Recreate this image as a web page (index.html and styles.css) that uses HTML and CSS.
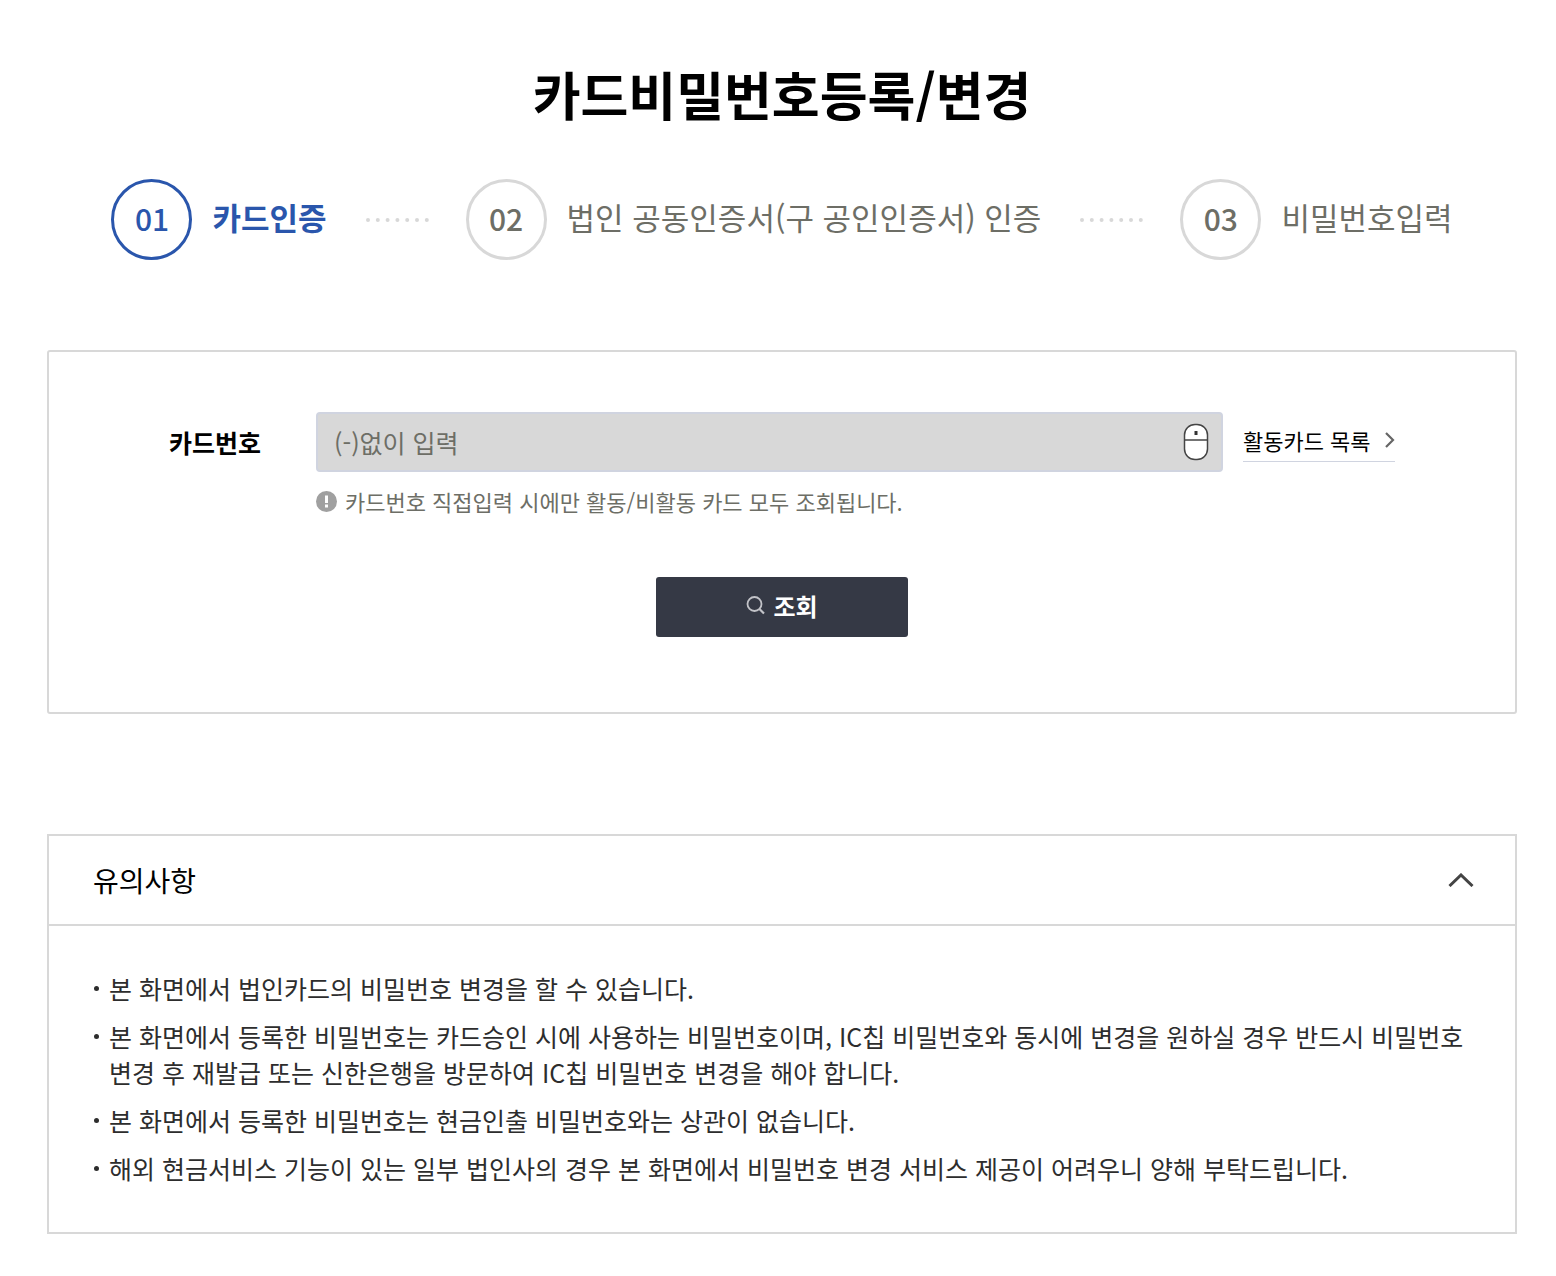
FILE: index.html
```html
<!DOCTYPE html>
<html lang="ko">
<head>
  <meta charset="utf-8" />
  <meta name="viewport" content="width=device-width, initial-scale=1" />
  <title>카드비밀번호등록/변경</title>
  <link rel="stylesheet" href="styles.css">
</head>
<body>
  <main class="container">
    <h1>카드비밀번호등록/변경</h1>

    <ol class="steps">
      <li class="step active" aria-current="step">
        <span class="step-num">01</span>
        <span class="step-name">카드인증</span>
      </li>
      <li class="step">
        <svg class="dots" viewBox="0 0 64 4" aria-hidden="true"><path d="M2 2H62" /></svg>
        <span class="step-num">02</span>
        <span class="step-name">법인 공동인증서(구 공인인증서) 인증</span>
      </li>
      <li class="step">
        <svg class="dots" viewBox="0 0 64 4" aria-hidden="true"><path d="M2 2H62" /></svg>
        <span class="step-num">03</span>
        <span class="step-name">비밀번호입력</span>
      </li>
    </ol>

    <form class="card-form">
      <div class="form-row">
        <label for="card-number">카드번호</label>
        <div class="field">
          <input type="text" id="card-number" placeholder="(-)없이 입력" aria-describedby="card-hint">
          <button type="button" class="mouse-btn" aria-label="마우스 입력">
            <svg width="26" height="38" viewBox="0 0 26 38" aria-hidden="true">
              <rect x="1.5" y="1.5" width="23" height="35" rx="10.5" fill="#fff" stroke="#444" stroke-width="1.5" />
              <path d="M1.5 17H24.5" stroke="#444" stroke-width="1.5" />
              <rect x="11.5" y="8" width="3" height="4" fill="#333" />
            </svg>
          </button>
        </div>
        <a href="#" class="list-link">활동카드 목록
          <svg width="11" height="16" viewBox="0 0 11 16" fill="none" stroke="#666" stroke-width="2.2" aria-hidden="true"><path d="M2 1L9 8L2 15" /></svg>
        </a>
      </div>
      <p class="hint" id="card-hint">
        <svg width="21" height="21" viewBox="0 0 21 21" aria-hidden="true">
          <circle cx="10.5" cy="10.5" r="10.5" fill="#a0a0a0" />
          <path d="M9 4.5h3v7.5h-3zM9 13.5h3v3h-3z" fill="#fff" />
        </svg>
        카드번호 직접입력 시에만 활동/비활동 카드 모두 조회됩니다.
      </p>
      <button type="submit" class="btn">
        <svg width="19" height="19" viewBox="0 0 19 19" fill="none" stroke="#c2c3c8" stroke-width="1.8" aria-hidden="true">
          <circle cx="8.5" cy="8" r="7" />
          <path d="M13.5 13L18 17.5" stroke-width="2.2" />
        </svg>
        조회
      </button>
    </form>

    <section class="notice">
      <h2>
        <button type="button" class="notice-toggle" aria-expanded="true" aria-controls="notice-list">
          유의사항
          <svg width="26" height="14" viewBox="0 0 26 14" fill="none" stroke="#444" stroke-width="3" aria-hidden="true"><path d="M1.5 13L13 2L24.5 13" /></svg>
        </button>
      </h2>
      <ul class="notice-list" id="notice-list">
        <li>본 화면에서 법인카드의 비밀번호 변경을 할 수 있습니다.</li>
        <li>본 화면에서 등록한 비밀번호는 카드승인 시에 사용하는 비밀번호이며, IC칩 비밀번호와 동시에 변경을 원하실 경우 반드시 비밀번호 변경 후 재발급 또는 신한은행을 방문하여 IC칩 비밀번호 변경을 해야 합니다.</li>
        <li>본 화면에서 등록한 비밀번호는 현금인출 비밀번호와는 상관이 없습니다.</li>
        <li>해외 현금서비스 기능이 있는 일부 법인사의 경우 본 화면에서 비밀번호 변경 서비스 제공이 어려우니 양해 부탁드립니다.</li>
      </ul>
    </section>
  </main>
</body>
</html>
```

FILE: styles.css
```css
* {
  box-sizing: border-box;
}

body {
  margin: 0;
  background-color: #fff;
  color: #000;
  font-family: "Noto Sans CJK KR", sans-serif;
  word-break: keep-all;
}

button,
input {
  font-family: inherit;
}

svg {
  flex: none;
}

.container {
  padding: 58px 39px 42px 47px;
}

h1 {
  margin: 0;
  font-size: 52px;
  font-weight: 700;
  line-height: 72px;
  text-align: center;
}

/* Steps */
.steps {
  display: flex;
  justify-content: center;
  margin: 49px 0 90px;
  padding: 0;
  list-style: none;
  color: #6d6e66;
  white-space: nowrap;
}

.step {
  display: flex;
  align-items: center;
}

.step-num {
  display: flex;
  align-items: center;
  justify-content: center;
  width: 81px;
  height: 81px;
  margin-right: 20px;
  padding-bottom: 4px;
  border: 3px solid #d8d8d8;
  border-radius: 50%;
  font-size: 30px;
  font-weight: 500;
}

.step-name {
  padding-bottom: 6px;
  font-size: 31px;
  line-height: 44px;
}

.step.active {
  color: #2a56ac;
}

.step.active .step-num {
  border-color: #2a56ac;
}

.step.active .step-name {
  font-weight: 700;
}

.dots {
  width: 64px;
  height: 4px;
  margin: 0 36px 0 39px;
  fill: none;
  stroke: #d8d8d8;
  stroke-width: 4;
  stroke-linecap: round;
  stroke-dasharray: 0 9.8;
}

/* Card number form */
.card-form {
  padding: 60px 120px 75px;
  border: 2px solid #d8d8d8;
  border-radius: 3px;
}

.form-row {
  display: flex;
  align-items: center;
}

.form-row label {
  width: 147px;
  font-size: 25px;
  font-weight: 700;
}

.field {
  display: flex;
  flex: 1;
  align-items: center;
  height: 60px;
  margin-right: 20px;
  padding: 0 12px 0 16px;
  border: 2px solid #d0d4e0;
  border-radius: 4px;
  background-color: #d8d8d8;
}

.field input {
  flex: 1;
  min-width: 0;
  padding: 0;
  border: none;
  background: none;
  font-size: 25px;
  outline: none;
}

.field input::placeholder {
  color: #6d6e66;
  opacity: 1;
}

.mouse-btn {
  display: flex;
  padding: 0;
  border: none;
  background: none;
  cursor: pointer;
}

.list-link {
  display: flex;
  align-items: center;
  justify-content: space-between;
  width: 152px;
  padding-bottom: 3px;
  border-bottom: 1px solid #d0d4e0;
  color: #000;
  font-size: 22px;
  line-height: 36px;
  text-decoration: none;
  white-space: nowrap;
}

.hint {
  display: flex;
  align-items: center;
  gap: 8px;
  margin: 13px 0 60px 147px;
  color: #6d6e66;
  font-size: 22px;
  line-height: 32px;
}

.btn {
  display: flex;
  align-items: center;
  justify-content: center;
  gap: 8px;
  width: 252px;
  height: 60px;
  margin: 0 auto;
  padding: 0 0 4px;
  border: none;
  border-radius: 3px;
  background-color: #353945;
  color: #fff;
  font-size: 24px;
  font-weight: 700;
  cursor: pointer;
}

/* Notice */
.notice {
  margin-top: 120px;
  border: 2px solid #d8d8d8;
}

.notice h2 {
  margin: 0;
  border-bottom: 2px solid #d8d8d8;
}

.notice-toggle {
  display: flex;
  align-items: center;
  justify-content: space-between;
  width: 100%;
  height: 88px;
  padding: 0 41px 0 44px;
  border: none;
  background: none;
  color: #000;
  font-size: 28px;
  cursor: pointer;
}

.notice-list {
  margin: 0;
  padding: 44px 44px 46px;
  color: #2d2d2d;
  font-size: 25px;
  line-height: 36px;
  list-style: none;
}

.notice-list li {
  position: relative;
  padding-left: 16px;
}

.notice-list li + li {
  margin-top: 12px;
}

.notice-list li::before {
  content: "";
  position: absolute;
  top: 16px;
  left: 1px;
  width: 5px;
  height: 5px;
  border-radius: 50%;
  background-color: #2d2d2d;
}
```
